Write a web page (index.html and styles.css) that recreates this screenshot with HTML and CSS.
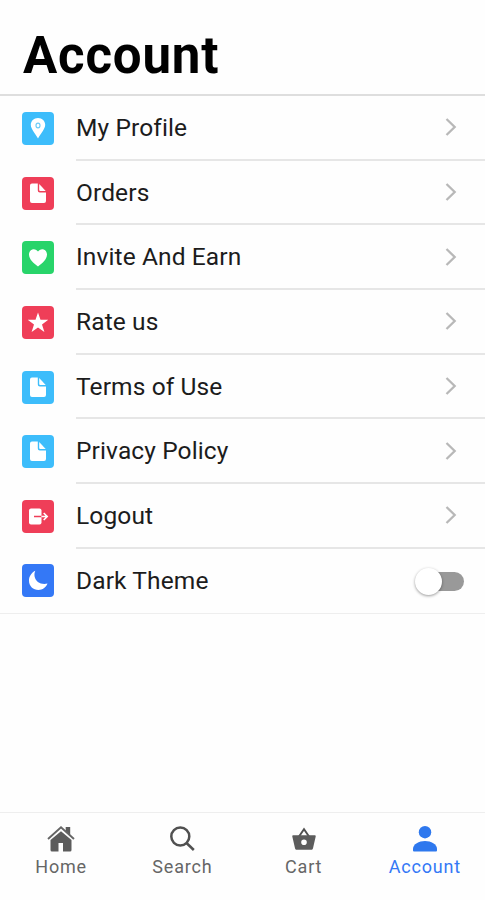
FILE: index.html
```html
<!DOCTYPE html>
<html lang="en">
<head>
    <meta charset="UTF-8">
    <meta name="viewport" content="width=device-width, initial-scale=1.0">
    <title>Account</title>
    <link rel="stylesheet" href="styles.css">
</head>
<body>
    <header class="header">
        <h1>Account</h1>
    </header>

    <main class="list">
        <a class="item">
            <svg class="icon sky" viewBox="0 0 32 33"><path d="M16 6c-4.200 0-7.200 3-7.200 6.800 0 4.500 4.700 8.900 7.200 13.700 2.500-4.800 7.200-9.200 7.200-13.700 0-3.800-3-6.800-7.200-6.800z"/><ellipse cx="16" cy="13.500" rx="2" ry="2.300" fill="none" stroke="#6fcdf8" stroke-width="1.200"/></svg>
            <div class="row"><span>My Profile</span><svg class="chevron" viewBox="0 0 12 20"><path d="M1.500 2l8.200 8-8.200 8"/></svg></div>
        </a>
        <a class="item">
            <svg class="icon red" viewBox="0 0 32 33"><use href="#page"/></svg>
            <div class="row"><span>Orders</span><svg class="chevron" viewBox="0 0 12 20"><path d="M1.500 2l8.200 8-8.200 8"/></svg></div>
        </a>
        <a class="item">
            <svg class="icon green" viewBox="0 0 32 33"><path d="M16 25.500c-4-2.800-9-7-9-11.900 0-3.200 2.200-5.400 4.800-5.400 1.800 0 3.300 1 4.200 2.400.9-1.400 2.400-2.400 4.200-2.400 2.600 0 4.800 2.200 4.800 5.400 0 4.900-5 9.100-9 11.900z"/></svg>
            <div class="row"><span>Invite And Earn</span><svg class="chevron" viewBox="0 0 12 20"><path d="M1.500 2l8.200 8-8.200 8"/></svg></div>
        </a>
        <a class="item">
            <svg class="icon red" viewBox="0 0 32 33"><path d="M16 6.500l2.500 7.300h7.800l-6.300 4.700 2.400 7.500-6.400-4.600-6.400 4.600 2.400-7.500-6.300-4.700h7.800z"/></svg>
            <div class="row"><span>Rate us</span><svg class="chevron" viewBox="0 0 12 20"><path d="M1.500 2l8.200 8-8.200 8"/></svg></div>
        </a>
        <a class="item">
            <svg class="icon sky" viewBox="0 0 32 33"><use href="#page"/></svg>
            <div class="row"><span>Terms of Use</span><svg class="chevron" viewBox="0 0 12 20"><path d="M1.500 2l8.200 8-8.200 8"/></svg></div>
        </a>
        <a class="item">
            <svg class="icon sky" viewBox="0 0 32 33"><use href="#page"/></svg>
            <div class="row"><span>Privacy Policy</span><svg class="chevron" viewBox="0 0 12 20"><path d="M1.500 2l8.200 8-8.200 8"/></svg></div>
        </a>
        <a class="item">
            <svg class="icon red" viewBox="0 0 32 33"><rect x="7" y="8.500" width="12.500" height="16" rx="2"/><path d="M12 16.500h7.500" fill="none" stroke="#ef3e58" stroke-width="1.400"/><path d="M19.500 16.500h5.500M21.700 13l3.500 3.500-3.500 3.500" fill="none" stroke="#fff" stroke-width="1.600"/></svg>
            <div class="row"><span>Logout</span><svg class="chevron" viewBox="0 0 12 20"><path d="M1.500 2l8.200 8-8.200 8"/></svg></div>
        </a>
        <label class="item last">
            <svg class="icon blue" viewBox="0 0 32 33"><path d="M13.300 6.800c-.9 2-1 3.700-.7 5.700.9 5.300 6.300 8.500 12.900 7.100-1.600 4-5 6.400-9 6.400-5.300 0-9.500-4-9.500-9.300 0-4.200 2.300-7.900 6.300-9.900z"/></svg>
            <div class="row"><span>Dark Theme</span><span class="toggle"><span class="knob"></span></span></div>
        </label>
    </main>

    <nav class="tabs">
        <a class="tab">
            <svg viewBox="0 0 28 28"><path d="M14 6.300L3.500 15v10a1.500 1.500 0 0 0 1.500 1.500h6.500V18h4.500v8.500h7a1.500 1.500 0 0 0 1.500-1.500V15z"/><path d="M18.700 2h4.500v9l-4.500-4.200z"/><path d="M1 14L14 2.300 27 14" fill="none" stroke="#656565" stroke-width="1.900"/></svg>
            <span>Home</span>
        </a>
        <a class="tab">
            <svg viewBox="0 0 28 28"><g fill="none" stroke="#505050" stroke-width="2.500"><circle cx="12.300" cy="11.500" r="9"/><path d="M18.500 18l7.300 7"/></g></svg>
            <span>Search</span>
        </a>
        <a class="tab">
            <svg viewBox="0 0 28 28"><path d="M9 11.500l5-7.300 5 7.300" fill="none" stroke="#505050" stroke-width="1.900"/><path fill-rule="evenodd" d="M3.300 10.200h21.400c.8 0 1.200.6 1 1.300l-2.700 11.800c-.3 1-.9 1.500-1.900 1.500H6.900c-1 0-1.600-.5-1.900-1.500L2.300 11.500c-.2-.7.2-1.300 1-1.300zm10.700 4.300a2.800 2.800 0 1 0 0 5.600 2.800 2.800 0 0 0 0-5.600z"/></svg>
            <span>Cart</span>
        </a>
        <a class="tab active">
            <svg viewBox="0 0 28 28"><circle cx="14" cy="7.200" r="6.200"/><path d="M2 25.500V24c0-5 6-8 12-8s12 3 12 8v1.500a1 1 0 0 1-1 1H3a1 1 0 0 1-1-1z"/></svg>
            <span>Account</span>
        </a>
    </nav>

    <!-- shared document icon -->
    <svg class="hidden">
        <symbol id="page" viewBox="0 0 32 33">
            <path d="M10 6.500h5.800v7a2 2 0 0 0 2 2H24V24a2 2 0 0 1-2 2H10a2 2 0 0 1-2-2V8.500a2 2 0 0 1 2-2z"/>
            <path d="M17.200 7l6.500 7h-5.500a1 1 0 0 1-1-1z"/>
        </symbol>
    </svg>
</body>
</html>
```
FILE: styles.css
```css
* {
    box-sizing: border-box;
}
body {
    margin: 0;
    height: 900px;
    display: flex;
    flex-direction: column;
    font-family: Roboto, "Liberation Sans", sans-serif;
    background-color: #fefefe;
    color: #1c1c1c;
}
.header {
    height: 96px;
    padding: 26px 23px 0;
    border-bottom: 2px solid #dedede;
}
h1 {
    margin: 0;
    font-size: 51px;
    line-height: 60px;
    font-weight: 700;
    letter-spacing: 0.8px;
    color: #000;
}
.list {
    flex: 1;
}
.item {
    display: flex;
    align-items: center;
    height: 64.7px;
    padding-left: 22px;
}
.icon {
    width: 32px;
    height: 33px;
    margin-right: 22px;
    border-radius: 4px;
    fill: #fff;
}
.sky {
    background-color: #3dbdfb;
}
.red {
    background-color: #ef3e58;
}
.green {
    background-color: #28d46a;
}
.blue {
    background-color: #3478f6;
}
.row {
    flex: 1;
    height: 100%;
    display: flex;
    align-items: center;
    justify-content: space-between;
    padding-right: 28px;
    border-bottom: 2px solid #e6e6e6;
    font-size: 24.5px;
    letter-spacing: 0.12px;
}
.chevron {
    width: 12px;
    height: 20px;
    fill: none;
    stroke: #b8b8b8;
    stroke-width: 2.300;
}
.last {
    border-bottom: 1px solid #eee;
}
.last .row {
    border-bottom: none;
    padding-right: 21px;
}
/* Dark theme switch */
.toggle {
    display: flex;
    align-items: center;
    width: 45px;
    height: 19px;
    margin-top: 1px;
    border-radius: 10px;
    background-color: #999;
}
.knob {
    width: 27px;
    height: 27px;
    flex: none;
    margin-left: -4px;
    border-radius: 50%;
    background-color: #fff;
    box-shadow: 0 1px 3px rgba(0, 0, 0, 0.4);
}
/* Bottom navigation */
.tabs {
    display: flex;
    height: 88px;
    padding-top: 12px;
    border-top: 1px solid #eee;
}
.tab {
    flex: 1;
    display: flex;
    flex-direction: column;
    align-items: center;
    padding-left: 1px;
    font-size: 18px;
    line-height: 22px;
    letter-spacing: 0.8px;
    color: #666;
    fill: #5c5c5c;
}
.tab svg {
    width: 28px;
    height: 28px;
    margin-bottom: 3px;
}
.active {
    color: #3478f6;
    fill: #2e78ee;
}
.hidden {
    position: absolute;
    width: 0;
    height: 0;
}
```
